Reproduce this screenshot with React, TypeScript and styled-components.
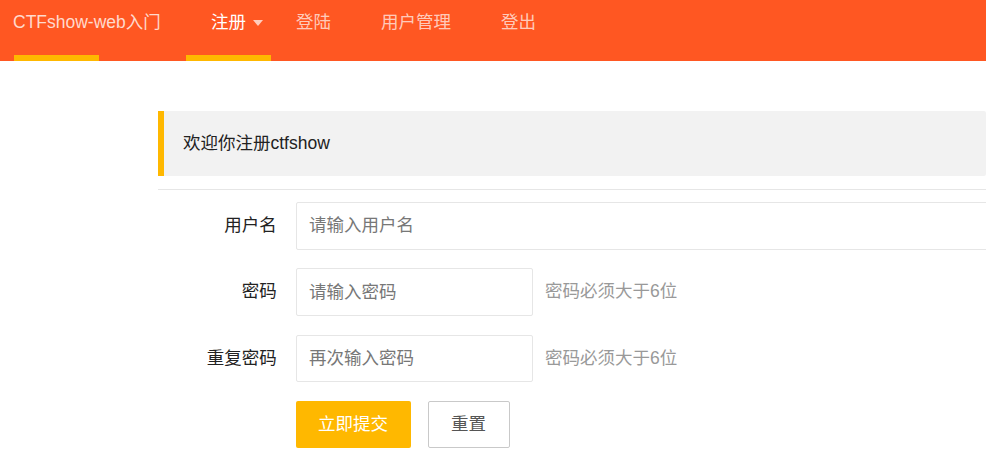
import React from "react";
import styled, { createGlobalStyle } from "styled-components";

const GlobalStyle = createGlobalStyle`
  html, body {
    margin: 0;
    padding: 0;
    overflow: hidden;
    background: #fff;
  }
  body {
    font-family: "Liberation Sans", "Noto Sans CJK SC", sans-serif;
    font-size: 17.5px;
    color: #333;
  }
  * { box-sizing: border-box; }
`;

const Header = styled.header`
  height: 61px;
  background: #ff5722;
  display: flex;
  align-items: stretch;
`;

const Logo = styled.div`
  position: relative;
  width: 186px;
  padding-left: 13px;
  line-height: 45px;
  color: rgba(255, 255, 255, 0.78);
  font-size: 17.5px;
  white-space: nowrap;
  &::after {
    content: "";
    position: absolute;
    left: 14px;
    bottom: 0;
    width: 85px;
    height: 6px;
    background: #ffb800;
  }
`;

const Nav = styled.nav`
  display: flex;
  align-items: stretch;
`;

const NavItem = styled.div<{ $active?: boolean }>`
  position: relative;
  padding: 0 25px;
  line-height: 45px;
  font-size: 17.5px;
  white-space: nowrap;
  color: ${(p) => (p.$active ? "#fff" : "rgba(255, 255, 255, 0.7)")};
  &::after {
    content: "";
    display: ${(p) => (p.$active ? "block" : "none")};
    position: absolute;
    left: 0;
    right: 0;
    bottom: 0;
    height: 6px;
    background: #ffb800;
  }
`;

const Caret = styled.span`
  position: absolute;
  right: 8px;
  top: 20px;
  width: 0;
  height: 0;
  border-style: solid;
  border-width: 6px 5px 0 5px;
  border-color: rgba(255, 255, 255, 0.7) transparent transparent transparent;
`;

const Main = styled.main`
  padding: 50px 0 0 158px;
  overflow: hidden;
`;

const Content = styled.div`
  width: 828px;
`;

const Quote = styled.div`
  margin-bottom: 12.5px;
  padding: 18.75px 18.75px 18.75px 19px;
  line-height: 27.5px;
  border-left: 6px solid #ffb800;
  border-radius: 0 2px 2px 0;
  background: #f2f2f2;
  color: #222;
  font-size: 17.5px;
`;

const Rule = styled.hr`
  height: 0;
  margin: 12.5px 0;
  border: none;
  border-bottom: 1px solid #e6e6e6;
`;

const FormItem = styled.div`
  display: flex;
  align-items: stretch;
  margin-bottom: 18.75px;
`;

const Label = styled.label`
  flex: 0 0 137.5px;
  padding-right: 18.75px;
  text-align: right;
  line-height: 47.5px;
  color: #222;
  font-size: 17.5px;
`;

const Input = styled.input<{ $inline?: boolean }>`
  height: 47.5px;
  min-width: 0;
  padding-left: 12.5px;
  border: 1px solid #e6e6e6;
  border-radius: 2px;
  background: #fff;
  font-family: inherit;
  font-size: 17.5px;
  color: #333;
  outline: none;
  ${(p) =>
    p.$inline
      ? "flex: 0 0 auto; width: 237px; margin-right: 12.5px;"
      : "flex: 1 1 auto; width: 0; margin-right: -20px;"}
  &::placeholder {
    color: #777;
  }
`;

const Aux = styled.div`
  line-height: 47.5px;
  color: #999;
  font-size: 17.5px;
  white-space: nowrap;
`;

const Buttons = styled.div`
  display: flex;
  margin-left: 137.5px;
  gap: 17px;
`;

const Button = styled.button<{ $primary?: boolean }>`
  height: 47.5px;
  padding: 0 22.5px;
  border-radius: 2px;
  font-family: inherit;
  font-size: 17.5px;
  line-height: 45.5px;
  cursor: pointer;
  border: ${(p) => (p.$primary ? "none" : "1px solid #c9c9c9")};
  background: ${(p) => (p.$primary ? "#ffb800" : "#fff")};
  color: ${(p) => (p.$primary ? "#fff" : "#555")};
`;

export default function App() {
  return (
    <>
      <GlobalStyle />
      <Header>
        <Logo>CTFshow-web入门</Logo>
        <Nav>
          <NavItem $active>
            注册
            <Caret />
          </NavItem>
          <NavItem>登陆</NavItem>
          <NavItem>用户管理</NavItem>
          <NavItem>登出</NavItem>
        </Nav>
      </Header>
      <Main>
        <Content>
          <Quote>欢迎你注册ctfshow</Quote>
          <Rule />
          <FormItem>
            <Label>用户名</Label>
            <Input placeholder="请输入用户名" />
          </FormItem>
          <FormItem>
            <Label>密码</Label>
            <Input $inline type="password" placeholder="请输入密码" />
            <Aux>密码必须大于6位</Aux>
          </FormItem>
          <FormItem>
            <Label>重复密码</Label>
            <Input $inline type="password" placeholder="再次输入密码" />
            <Aux>密码必须大于6位</Aux>
          </FormItem>
          <Buttons>
            <Button $primary>立即提交</Button>
            <Button>重置</Button>
          </Buttons>
        </Content>
      </Main>
    </>
  );
}
